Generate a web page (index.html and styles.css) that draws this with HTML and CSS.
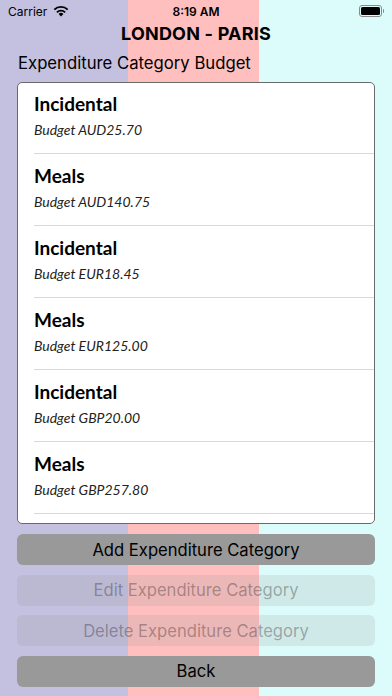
FILE: index.html
```html
<!DOCTYPE html>
<html lang="en">
<head>
    <meta charset="UTF-8">
    <meta name="viewport" content="width=device-width, initial-scale=1.0">
    <title>London - Paris</title>
    <link rel="stylesheet" href="styles.css">
</head>
<body>
    <div class="screen">
        <div class="status-bar">
            <div class="carrier">
                Carrier
                <svg class="wifi" width="16" height="12" viewBox="0 0 16 12">
                    <path d="M8 11.5 L5.6 9 A3.4 3.4 0 0 1 10.4 9 Z" fill="#000"/>
                    <path d="M3.9 7.3 A5.8 5.8 0 0 1 12.1 7.3" fill="none" stroke="#000" stroke-width="1.9"/>
                    <path d="M1.3 4.6 A9.5 9.5 0 0 1 14.7 4.6" fill="none" stroke="#000" stroke-width="1.9"/>
                </svg>
            </div>
            <div class="time">8:19 AM</div>
            <div class="battery">
                <div class="battery-body"><div class="battery-level"></div></div>
                <div class="battery-nub"></div>
            </div>
        </div>

        <h1 class="route">LONDON - PARIS</h1>
        <div class="section-title">Expenditure Category Budget</div>

        <div class="list">
            <div class="row">
                <div class="row-title">Incidental</div>
                <div class="row-sub">Budget AUD25.70</div>
            </div>
            <div class="row">
                <div class="row-title">Meals</div>
                <div class="row-sub">Budget AUD140.75</div>
            </div>
            <div class="row">
                <div class="row-title">Incidental</div>
                <div class="row-sub">Budget EUR18.45</div>
            </div>
            <div class="row">
                <div class="row-title">Meals</div>
                <div class="row-sub">Budget EUR125.00</div>
            </div>
            <div class="row">
                <div class="row-title">Incidental</div>
                <div class="row-sub">Budget GBP20.00</div>
            </div>
            <div class="row">
                <div class="row-title">Meals</div>
                <div class="row-sub">Budget GBP257.80</div>
            </div>
        </div>

        <div class="buttons">
            <button class="btn">Add Expenditure Category</button>
            <button class="btn disabled" disabled>Edit Expenditure Category</button>
            <button class="btn disabled" disabled>Delete Expenditure Category</button>
            <button class="btn">Back</button>
        </div>
    </div>
</body>
</html>
```

FILE: styles.css
```css
body {
    margin: 0;
    font-family: Inter, "Noto Sans", sans-serif;
    color: #000;
}
.screen {
    width: 392px;
    height: 696px;
    display: flex;
    flex-direction: column;
    overflow: hidden;
    /* three coloured stripes behind everything */
    background: linear-gradient(90deg,
        #c3c0e0 0, #c3c0e0 128px,
        #ffbfbf 128px, #ffbfbf 259px,
        #dcfcfc 259px, #dcfcfc 100%);
}
.status-bar {
    height: 22px;
    display: flex;
    align-items: center;
    justify-content: space-between;
    padding: 0 8px;
    font-size: 12px;
    position: relative;
}
.carrier {
    display: flex;
    align-items: center;
    gap: 6px;
    font-size: 12px;
}
.wifi {
    margin-top: -1px;
}
.time {
    position: absolute;
    left: 0;
    right: 0;
    text-align: center;
    font-weight: 600;
    font-size: 12px;
}
.battery {
    display: flex;
    align-items: center;
    gap: 1px;
}
.battery-body {
    width: 19px;
    height: 8px;
    border: 1.5px solid #8a8a8a;
    border-radius: 3px;
    padding: 1px;
}
.battery-level {
    width: 100%;
    height: 100%;
    background: #000;
    border-radius: 1.5px;
}
.battery-nub {
    width: 1.5px;
    height: 4px;
    background: #8a8a8a;
    border-radius: 0 1px 1px 0;
}
.route {
    margin: 0;
    height: 22px;
    line-height: 24px;
    text-align: center;
    font-size: 18px;
    font-weight: 700;
    letter-spacing: 0.2px;
}
.section-title {
    margin-top: 8px;
    height: 22px;
    line-height: 22px;
    padding-left: 18px;
    font-size: 16.7px;
}
.list {
    margin: 8px 17px 0;
    height: 442px;
    flex-shrink: 0;
    box-sizing: border-box;
    background: #fff;
    border: 1px solid #6a6a6a;
    border-radius: 5px;
    overflow: hidden;
    font-family: Lato, "Noto Sans", sans-serif;
}
.row {
    height: 72px;
    box-sizing: border-box;
    margin-left: 16px;
    border-bottom: 1px solid #d9d9d9;
    padding-top: 10px;
}
.row:first-child {
    height: 71px;
    padding-top: 9px;
}
.row-title {
    font-size: 19px;
    font-weight: 700;
    line-height: 24px;
}
.row-sub {
    margin-top: 5px;
    font-size: 14px;
    font-style: italic;
    line-height: 17px;
    color: #222;
}
.buttons {
    margin: 10px 17px 0;
    display: flex;
    flex-direction: column;
    gap: 9.5px;
}
.btn {
    height: 31px;
    display: flex;
    align-items: center;
    justify-content: center;
    border: none;
    border-radius: 6px;
    background: #999;
    color: #000;
    font-family: Inter, "Noto Sans", sans-serif;
    font-size: 16.6px;
    padding: 0;
}
.btn.disabled {
    background: rgba(153, 153, 153, 0.2);
    color: rgba(0, 0, 0, 0.3);
}
```
